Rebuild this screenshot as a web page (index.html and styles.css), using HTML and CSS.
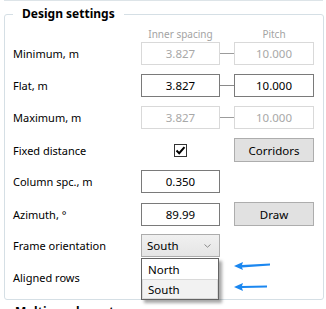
FILE: index.html
```html
<!DOCTYPE html>
<html lang="en">
<head>
  <meta charset="UTF-8" />
  <title>Design settings</title>
  <link rel="stylesheet" href="styles.css">
</head>
<body>

<div class="prev"></div>

<fieldset class="group">
  <legend>Design settings</legend>

  <div class="row head">
    <span></span>
    <span class="col-title">Inner spacing</span>
    <span></span>
    <span class="col-title">Pitch</span>
  </div>

  <div class="rows">
    <div class="row">
      <label>Minimum, m</label>
      <input class="field" type="text" value="3.827" disabled />
      <span class="link off"></span>
      <input class="field" type="text" value="10.000" disabled />
    </div>

    <div class="row">
      <label>Flat, m</label>
      <input class="field" type="text" value="3.827" />
      <span class="link"></span>
      <input class="field" type="text" value="10.000" />
    </div>

    <div class="row">
      <label>Maximum, m</label>
      <input class="field" type="text" value="3.827" disabled />
      <span class="link off"></span>
      <input class="field" type="text" value="10.000" disabled />
    </div>

    <div class="row">
      <label>Fixed distance</label>
      <span class="check-cell">
        <span class="check">
          <svg width="11" height="11" viewBox="0 0 11 11"><path d="M1.5 5.5 L4.2 8.2 L9.5 2.2" fill="none" stroke="#000" stroke-width="2"/></svg>
        </span>
      </span>
      <span></span>
      <button class="btn">Corridors</button>
    </div>

    <div class="row">
      <label>Column spc., m</label>
      <input class="field" type="text" value="0.350" />
    </div>

    <div class="row">
      <label>Azimuth, °</label>
      <input class="field" type="text" value="89.99" />
      <span></span>
      <button class="btn">Draw</button>
    </div>

    <div class="row">
      <label>Frame orientation</label>
      <div class="combo">
        <span>South</span>
        <svg class="chev" width="7" height="4" viewBox="0 0 7 4"><path d="M0.5 0.5 L3.5 3.2 L6.5 0.5" fill="none" stroke="#8a8a8a" stroke-width="1"/></svg>
        <ul class="popup">
          <li>North</li>
          <li class="hot">South</li>
        </ul>
      </div>
      <span></span>
      <span class="note">
        <svg class="arrows" width="40" height="30" viewBox="0 0 40 30">
          <polygon points="1,4 10,0 9,3 37,1.5 37,3.5 9,5.5 10,8" fill="#1b87f0"/>
          <polygon points="1,25 10,21 9,24 34,23.5 34,25.5 9,26 10,29" fill="#1b87f0"/>
        </svg>
      </span>
    </div>

    <div class="row">
      <label>Aligned rows</label>
    </div>
  </div>
</fieldset>

<div class="next">Multi-row layout</div>

</body>
</html>
```

FILE: styles.css
```css
body {
  margin: 0;
  font-family: "Noto Sans", "Open Sans", sans-serif;
  font-size: 11px;
  color: #000;
  background: #fff;
  overflow: hidden;
}
.prev {
  height: 1px;
  margin: 0 3px 0 4px;
  background: #dde4e8;
}
.group {
  width: 320px;
  box-sizing: border-box;
  margin: 5px 0 0 4px;
  padding: 4px 8px 10px 8px;
  border: 1px solid #d5dfe5;
  border-radius: 3px;
}
.group legend {
  margin-left: 0;
  padding: 0 9px;
  font-size: 12px;
  font-weight: bold;
  line-height: 16px;
}
.row {
  display: grid;
  grid-template-columns: 128px 79px 14px 80px;
  align-items: center;
  height: 23px;
}
.row.head {
  height: 16px;
}
.rows {
  display: flex;
  flex-direction: column;
  gap: 9px;
}
.col-title {
  text-align: center;
  font-size: 10px;
  color: #a3a3a3;
}
.field {
  width: 100%;
  height: 23px;
  box-sizing: border-box;
  margin: 0;
  padding: 0 4px;
  border: 1px solid #7a7a7a;
  background: #fff;
  font-family: inherit;
  font-size: 11.5px;
  color: #000;
  text-align: center;
}
.field:disabled {
  border-color: #d9d9d9;
  color: #a8a8a8;
}
.link {
  height: 1px;
  background: #8a8a8a;
}
.link.off {
  background: #9c9c9c;
}
.check-cell {
  display: flex;
  justify-content: center;
}
.check {
  width: 13px;
  height: 13px;
  box-sizing: border-box;
  border: 1px solid #333;
  display: flex;
  align-items: center;
  justify-content: center;
}
.btn {
  height: 24px;
  margin: 0;
  padding: 0;
  border: 1px solid #adadad;
  background: #e1e1e1;
  font-family: inherit;
  font-size: 11.5px;
  color: #000;
}
.combo {
  position: relative;
  height: 23px;
  box-sizing: border-box;
  border: 1px solid #acacac;
  background: linear-gradient(#f0f0f0, #e5e5e5);
  display: flex;
  align-items: center;
  justify-content: space-between;
  padding: 0 8px 0 5px;
  font-size: 11.5px;
}
.popup {
  position: absolute;
  top: 23px;
  left: -1px;
  width: 78px;
  box-sizing: border-box;
  margin: 0;
  padding: 0;
  list-style: none;
  border: 1px solid #646464;
  background: #fff;
  box-shadow: 3px 3px 3px rgba(0, 0, 0, 0.35);
}
.popup li {
  height: 20px;
  line-height: 20px;
  padding-left: 5px;
  border: 1px solid transparent;
  box-sizing: border-box;
}
.popup li.hot {
  background: #f2f2f2;
  border-color: #dadada;
}
.note {
  position: relative;
  height: 23px;
}
.arrows {
  position: absolute;
  top: 28px;
  left: -1px;
}
.next {
  margin: 3px 0 0 15px;
  font-size: 12px;
  font-weight: bold;
}
```
